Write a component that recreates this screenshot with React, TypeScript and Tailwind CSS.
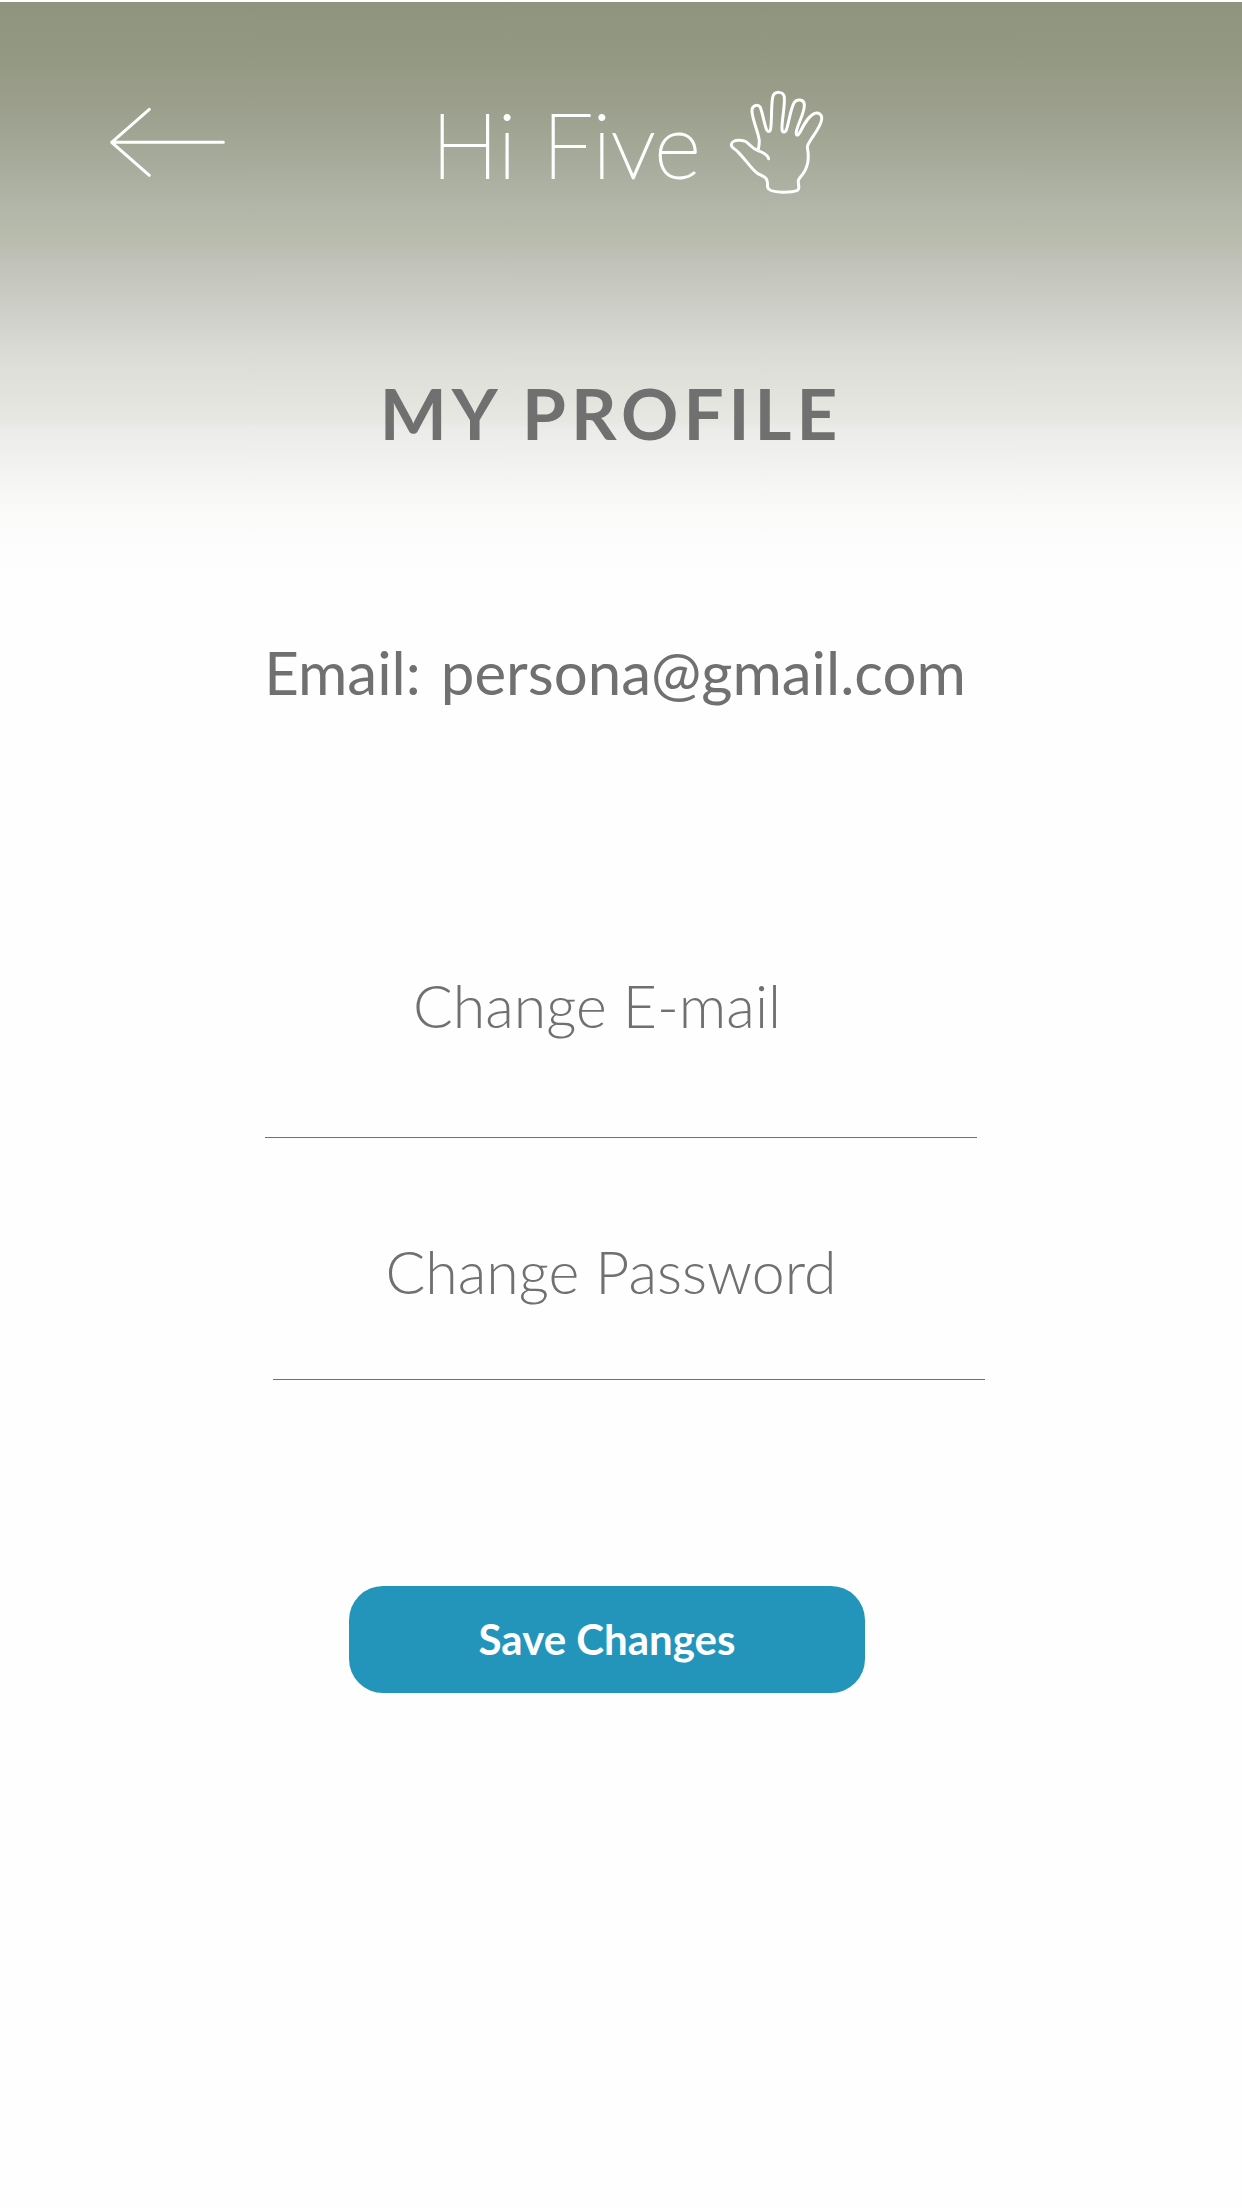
import React from "react";

function BackArrow() {
  return (
    <svg viewBox="57 83 351 213" className="h-[71px] w-[117px]" fill="none" stroke="white" strokeWidth="9" strokeLinecap="round" strokeLinejoin="round" aria-hidden="true">
      <path d="M178 90 L65 189 L178 288 M65 189 H400" />
    </svg>
  );
}

function Hand() {
  return (
    <svg viewBox="63 60 285 315" className="h-[105px] w-[95px]" fill="none" stroke="white" strokeWidth="9" strokeLinecap="round" strokeLinejoin="round" aria-hidden="true">
      <path d="M182 266 C180 253 164 247 150 242 C136 237 129 228 121 221 C114 213 104 211 93 211 C80 211 70 216 70 224 C70 235 82 236 91 247 C112 268 128 294 147 309 C160 318 176 319 177 332 C181 343 175 351 182 357 C196 370 252 368 268 361 C278 356 269 344 271 332 C273 320 291 316 299 279 C304 250 298 240 298 231 C299 214 340 174 341 147 C343 133 331 127 320 130 C301 137 287 165 276 187 C270 198 263 199 265 185 C269 161 291 128 289 103 C288 87 266 87 259 97 C248 114 243 155 236 177 C232 189 222 189 222 176 C221 151 231 111 229 83 C228 62 198 62 194 82 C189 106 192 151 188 176 C187 187 179 187 175 177 C168 158 164 130 157 112 C150 101 131 106 132 123 C133 151 152 188 154 213 C154 226 152 233 150 242" />
    </svg>
  );
}

const fieldClass =
  "block w-full border-b border-[#707070] bg-transparent text-center text-[59px] font-light leading-[70px] text-[#707070] outline-none placeholder:text-[#707070] placeholder:opacity-100";

export default function App() {
  return (
    <div className="min-h-screen border-t-2 border-white bg-[#fefefe] bg-[linear-gradient(180deg,#8f947f_0px,#939882_50px,#9a9e8b_100px,#a7ab9b_160px,#b1b5a7_200px,#b9bdae_240px,#c1c2b9_260px,#cbccc4_298px,#d9dbd4_348px,#e7e8e2_420px,#ebebea_426px,#f5f5f3_480px,#f9f9f8_502px,#fdfdfd_542px,#fefefe_580px)] font-['Lato',sans-serif] text-[#707070]">
      <header className="grid grid-cols-[1fr_auto_1fr] items-center pt-[88px] pr-24 pl-[109px]">
        <button type="button" aria-label="Back" className="justify-self-start">
          <BackArrow />
        </button>
        <div className="flex items-center gap-7 text-white">
          <span className="text-[90px] font-thin leading-[100px] [-webkit-text-stroke:2px_white]">Hi Five</span>
          <Hand />
        </div>
      </header>

      <main>
        <h1 className="mt-[175px] pr-5 text-center text-[71px] font-bold leading-[86px] tracking-[5px]">MY PROFILE</h1>
        <p className="mt-[181px] flex justify-center gap-5 pr-3 text-[60px] leading-[70px]">
          <span>Email:</span>
          <span>persona@gmail.com</span>
        </p>

        <form className="mx-auto mt-[264px] w-[712px] max-w-full" onSubmit={(e) => e.preventDefault()}>
          <input type="email" aria-label="Change E-mail" placeholder="Change E-mail" className={`${fieldClass} pr-12 pb-24`} />
          <div className="mt-[99px] -mr-2 ml-2">
            <input type="password" aria-label="Change Password" placeholder="Change Password" className={`${fieldClass} pr-9 pb-[72px]`} />
          </div>
          <div className="mt-[206px] flex justify-center pr-7">
            <button type="submit" className="h-[107px] w-[516px] rounded-[34px] bg-[#2395ba] text-[42px] font-bold text-white">
              Save Changes
            </button>
          </div>
        </form>
      </main>
    </div>
  );
}
